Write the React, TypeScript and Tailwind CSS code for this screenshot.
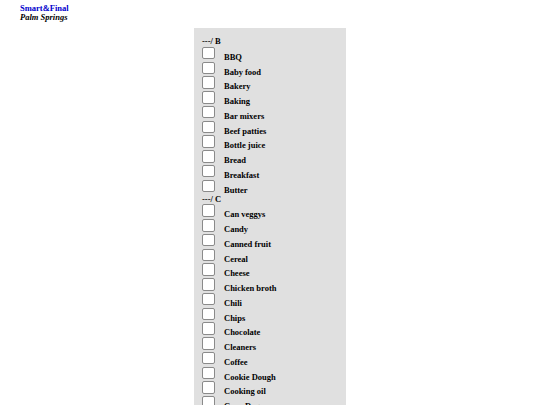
const sections: { letter: string; items: string[] }[] = [
  {
    letter: "B",
    items: [
      "BBQ",
      "Baby food",
      "Bakery",
      "Baking",
      "Bar mixers",
      "Beef patties",
      "Bottle juice",
      "Bread",
      "Breakfast",
      "Butter",
    ],
  },
  {
    letter: "C",
    items: [
      "Can veggys",
      "Candy",
      "Canned fruit",
      "Cereal",
      "Cheese",
      "Chicken broth",
      "Chili",
      "Chips",
      "Chocolate",
      "Cleaners",
      "Coffee",
      "Cookie Dough",
      "Cooking oil",
      "Corn Dogs",
      "Crackers",
      "Cream",
    ],
  },
];

function Row({ label }: { label: string }) {
  return (
    <label className="flex items-start h-[14.75px]">
      <span className="mt-[0.75px] w-[13px] h-[12.5px] shrink-0 rounded-[2px] border border-[#8a8a8a] bg-white" />
      <span className="ml-[9px] self-end leading-[10px] translate-y-[0.75px]">{label}</span>
    </label>
  );
}

export default function App() {
  return (
    <div className="min-h-[405px] bg-white font-['Liberation_Serif',serif] text-[8.5px] font-bold text-black">
      <div className="pl-[20px] pt-[4px] leading-[9px]">
        <div className="text-[#0000cc]">Smart&amp;Final</div>
        <div className="italic">Palm Springs</div>
      </div>
      <div className="mx-auto mt-[6px] w-[152px] bg-[#e0e0e0] pl-[8px] pt-[8px] pb-4">
        {sections.map((s) => (
          <div key={s.letter}>
            <div className="h-[10px] leading-[10px]">---/ {s.letter}</div>
            {s.items.map((it) => (
              <Row key={it} label={it} />
            ))}
          </div>
        ))}
      </div>
    </div>
  );
}
